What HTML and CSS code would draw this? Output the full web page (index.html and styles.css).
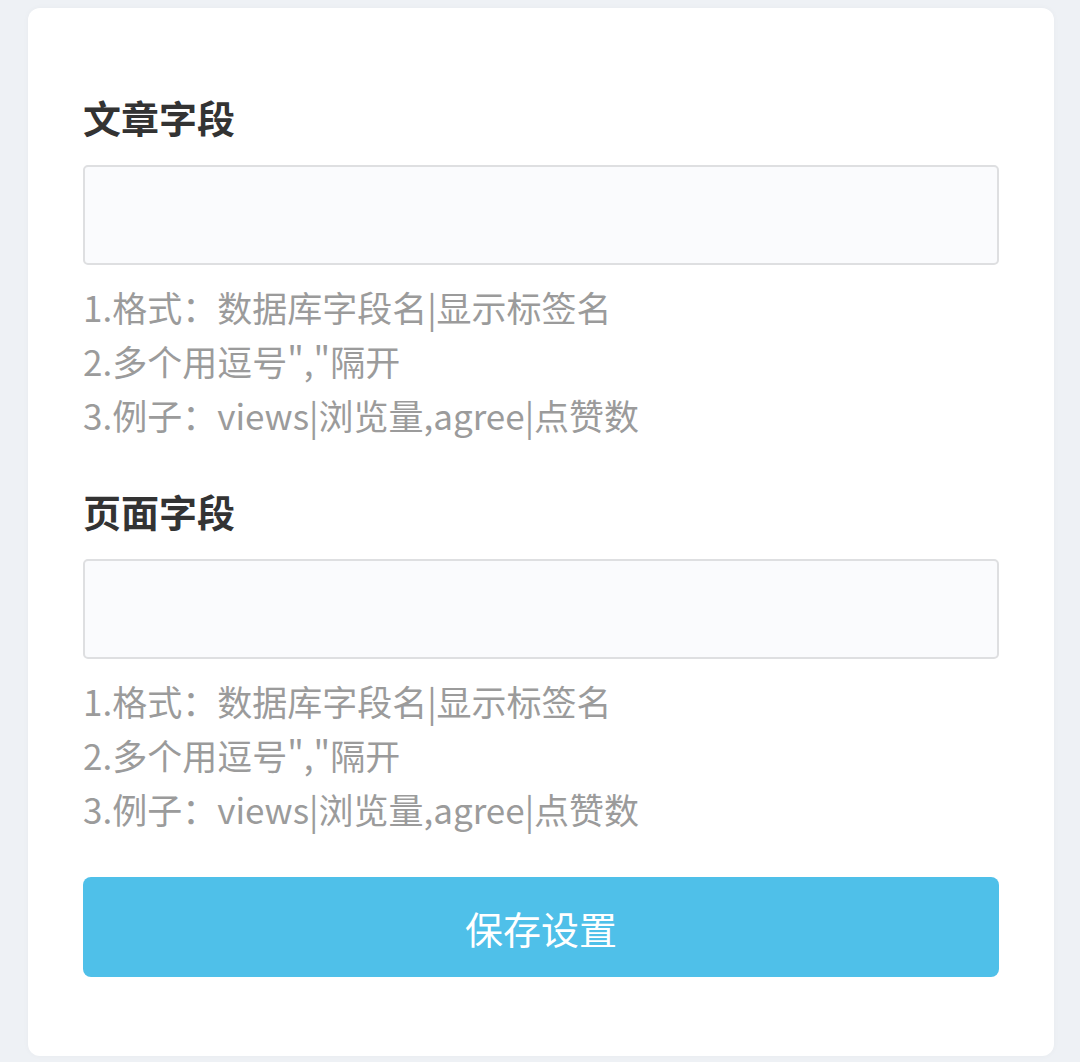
FILE: index.html
```html
<!DOCTYPE html>
<html lang="zh-CN">
<head>
    <meta charset="UTF-8">
    <meta name="viewport" content="width=device-width, initial-scale=1.0">
    <title>字段设置</title>
    <link rel="stylesheet" href="styles.css">
</head>
<body>

    <!-- Field Settings -->
    <form class="settings-card">

        <div class="field-group">
            <label for="post_fields" class="field-label">文章字段</label>
            <input type="text" id="post_fields" name="post_fields" class="field-input">
            <div class="field-help">
                <p>1.格式：数据库字段名|显示标签名</p>
                <p>2.多个用逗号","隔开</p>
                <p>3.例子：views|浏览量,agree|点赞数</p>
            </div>
        </div>

        <div class="field-group">
            <label for="page_fields" class="field-label">页面字段</label>
            <input type="text" id="page_fields" name="page_fields" class="field-input">
            <div class="field-help">
                <p>1.格式：数据库字段名|显示标签名</p>
                <p>2.多个用逗号","隔开</p>
                <p>3.例子：views|浏览量,agree|点赞数</p>
            </div>
        </div>

        <button type="submit" class="save-btn">保存设置</button>
    </form>

</body>
</html>
```

FILE: styles.css
```css
/* Common Styles */
body {
    font-family: "Noto Sans CJK SC", "Noto Sans", sans-serif;
    background-color: #eef1f5;
    margin: 0;
    padding: 8px 26px 6px 28px;
}

.settings-card {
    background-color: #fff;
    border-radius: 12px;
    padding: 85px 55px 79px;
    box-shadow: 0 0 6px rgba(0, 0, 0, 0.03);
}

.field-group + .field-group {
    margin-top: 45px;
}

.field-label {
    display: block;
    font-size: 38px;
    font-weight: bold;
    line-height: 48px;
    color: #333;
    margin-bottom: 24px;
}

.field-input {
    display: block;
    box-sizing: border-box;
    width: 100%;
    height: 100px;
    margin: 0;
    padding: 0 20px;
    border: 2px solid #dedfe1;
    border-radius: 5px;
    background-color: #fafbfd;
    font-family: inherit;
    font-size: 34px;
}

.field-help {
    margin-top: 15px;
    font-size: 35px;
    line-height: 54px;
    color: #9b9b9b;
}

.field-help p {
    margin: 0;
}

/* Save Button */
.save-btn {
    display: block;
    width: 100%;
    height: 100px;
    margin-top: 41px;
    border: none;
    border-radius: 8px;
    background-color: #4fc0e9;
    color: #fff;
    font-family: inherit;
    font-size: 38px;
    cursor: pointer;
}
```
